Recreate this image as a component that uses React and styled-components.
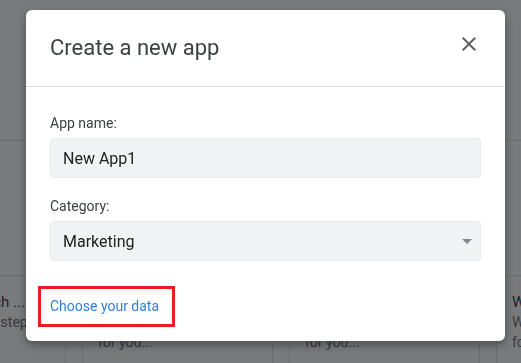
import React from "react";
import styled, { createGlobalStyle } from "styled-components";

const GlobalStyle = createGlobalStyle`
  html, body {
    margin: 0;
    padding: 0;
    width: 521px;
    height: 363px;
    overflow: hidden;
    background: #fff;
    font-family: Roboto, "Liberation Sans", Arial, sans-serif;
  }
  * { box-sizing: border-box; }
`;

const Page = styled.div`
  width: 521px;
  height: 363px;
  overflow: hidden;
  padding-top: 140px;
`;

const CardRow = styled.div`
  display: flex;
  gap: 16px;
  margin-left: -125px;
`;

const Card = styled.div`
  flex: 0 0 191px;
  width: 191px;
  min-width: 0;
  height: 240px;
  border: 1px solid #dadce0;
  background: #fff;
`;

const Thumb = styled.div`
  height: 135px;
  border-bottom: 1px solid #dadce0;
`;

const CardBody = styled.div`
  padding: 16px 15px;
  white-space: nowrap;
  overflow: hidden;
`;

const CardTitle = styled.div`
  font-size: 15px;
  line-height: 20px;
  color: #202124;
`;

const CardText = styled.div`
  font-size: 14px;
  line-height: 20px;
  color: #5f6368;
`;

const Overlay = styled.div`
  position: fixed;
  inset: 0;
  background: rgba(32, 33, 36, 0.6);
  display: flex;
  align-items: flex-start;
  padding: 10px 0 0 26px;
`;

const Dialog = styled.div`
  width: 479px;
  background: #fff;
  border-radius: 6px;
  box-shadow: 0 4px 10px rgba(0, 0, 0, 0.35);
`;

const Header = styled.div`
  display: flex;
  justify-content: space-between;
  align-items: flex-start;
  padding: 24px;
  border-bottom: 1px solid #e0e0e0;
`;

const Title = styled.h2`
  margin: 0;
  font-size: 22px;
  line-height: 28px;
  font-weight: 400;
  color: #3c4043;
`;

const CloseButton = styled.button`
  width: 24px;
  height: 24px;
  margin-top: -2px;
  padding: 0;
  border: 0;
  background: none;
  display: flex;
  cursor: pointer;
`;

const Body = styled.div`
  padding: 26px 24px 25px;
`;

const Field = styled.div`
  display: flex;
  flex-direction: column;
  gap: 5px;
  margin-bottom: ${props => props.$last ? "35px" : "18px"};
`;

const Label = styled.label`
  font-size: 14px;
  line-height: 20px;
  color: #3c4043;
`;

const Box = styled.div`
  height: 40px;
  display: flex;
  align-items: center;
  justify-content: space-between;
  padding: 0 1px 0 12px;
  background: #f1f3f4;
  border: 1px solid #e8eaed;
  border-radius: 4px;
  font-size: 16px;
  color: #202124;
`;

const Link = styled.a`
  position: relative;
  display: inline-block;
  font-size: 14px;
  line-height: 20px;
  color: #2f80dc;
  text-decoration: none;
  &::after {
    content: "";
    position: absolute;
    left: -12px;
    top: -10px;
    right: -16px;
    bottom: -11px;
    border: 3px solid #ed1c24;
  }
`;

const cards = [
  ["Product Research ...", "Plan each launch step", "with templates"],
  ["Campaign tracker", "Keep campaigns on", "for you..."],
  ["Event planning", "Organize every detail", "for you..."],
  ["Weekly report", "Weekly summaries", "for you..."],
];

const App = () => {
  return (
    <>
      <GlobalStyle />
      <Page>
        <CardRow>
          {cards.map(([title, a, b]) => (
            <Card key={title}>
              <Thumb />
              <CardBody>
                <CardTitle>{title}</CardTitle>
                <CardText>{a}</CardText>
                <CardText>{b}</CardText>
              </CardBody>
            </Card>
          ))}
        </CardRow>
      </Page>
      <Overlay>
        <Dialog>
          <Header>
            <Title>Create a new app</Title>
            <CloseButton aria-label="Close">
              <svg width="24" height="24" viewBox="0 0 24 24">
                <path
                  fill="#5f6368"
                  d="M19 6.41L17.59 5 12 10.59 6.41 5 5 6.41 10.59 12 5 17.59 6.41 19 12 13.41 17.59 19 19 17.59 13.41 12z"
                />
              </svg>
            </CloseButton>
          </Header>
          <Body>
            <Field>
              <Label>App name:</Label>
              <Box>New App1</Box>
            </Field>
            <Field $last>
              <Label>Category:</Label>
              <Box>
                Marketing
                <svg width="24" height="24" viewBox="0 0 24 24">
                  <path fill="#80868b" d="M7 10l5 5 5-5z" />
                </svg>
              </Box>
            </Field>
            <Link href="#">Choose your data</Link>
          </Body>
        </Dialog>
      </Overlay>
    </>
  );
};

export default App;
